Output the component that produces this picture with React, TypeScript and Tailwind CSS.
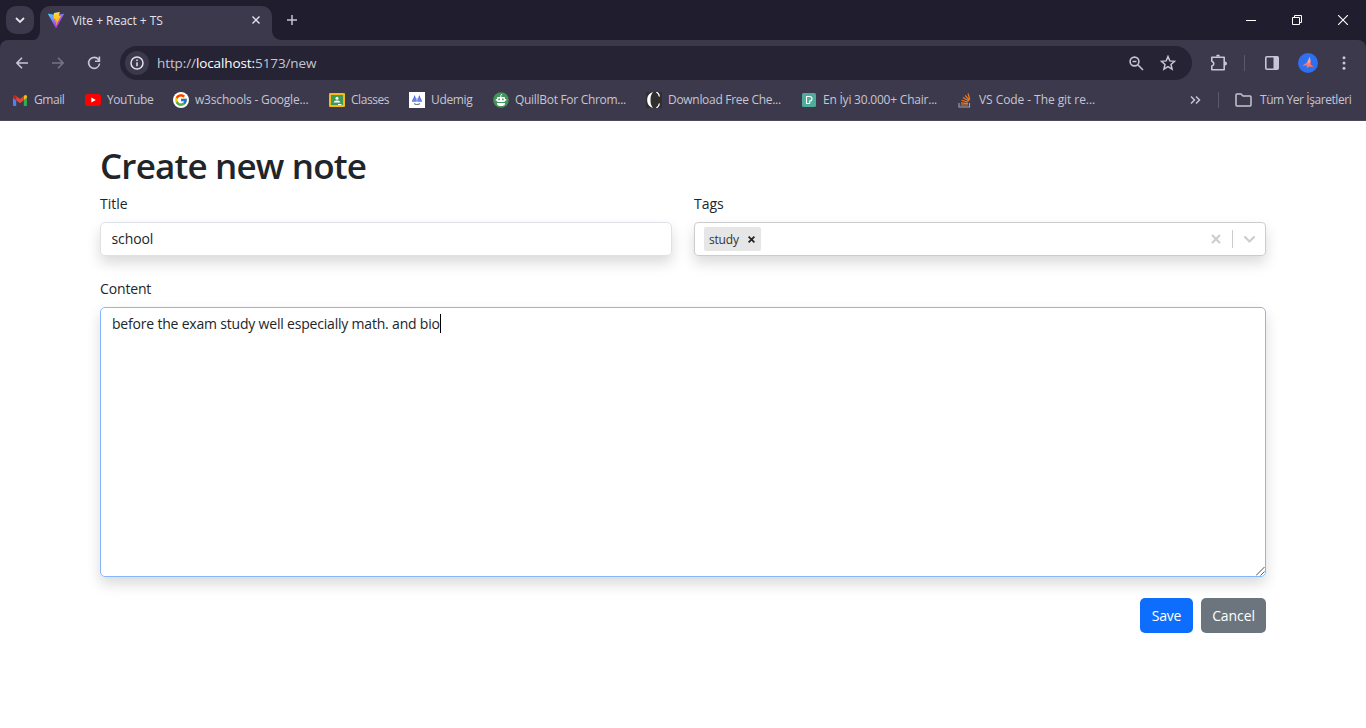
import React from "react";
import { FcGoogle } from "react-icons/fc";

type Glyph = React.ReactNode;

const GmailIcon = () => (
  <svg width="14" height="11" viewBox="52 42 88 66" preserveAspectRatio="none">
    <path fill="#4285f4" d="M58 108h14V74L52 59v43c0 3.320 2.690 6 6 6" />
    <path fill="#34a853" d="M120 108h14c3.320 0 6-2.690 6-6V59l-20 15" />
    <path fill="#fbbc04" d="M120 48v26l20-15v-8c0-7.420-8.470-11.650-14.400-7.200" />
    <path fill="#ea4335" d="M72 74V48l24 18 24-18v26L96 92" />
    <path fill="#c5221f" d="M52 51v8l20 15V48l-5.600-4.200c-5.940-4.450-14.400-.22-14.400 7.200" />
  </svg>
);

const YouTubeIcon = () => (
  <svg width="16" height="12" viewBox="0 0 16 12">
    <rect width="16" height="12" rx="3" fill="#f00" />
    <path d="M6.300 3.400v5.200L10.800 6z" fill="#fff" />
  </svg>
);

const GoogleIcon = () => (
  <span className="flex size-4 items-center justify-center rounded-full bg-white">
    <FcGoogle size={14} />
  </span>
);

const ClassroomIcon = () => (
  <svg width="16" height="14" viewBox="0 0 16 14">
    <rect width="16" height="14" rx="1" fill="#f5ba15" />
    <rect x="2" y="2" width="12" height="10" fill="#3f9a58" />
    <circle cx="8" cy="5.300" r="1.500" fill="#fff" />
    <path d="M4.700 9.400c0-1.600 2.200-2 3.300-2s3.300.4 3.300 2z" fill="#fff" />
    <path d="M9 11h3.500v1H9z" fill="#fff" />
  </svg>
);

const UdemigIcon = () => (
  <svg width="16" height="16" viewBox="0 0 16 16">
    <rect width="16" height="16" fill="#fff" />
    <path d="M5.800 3 7.600 9.500H3zM10.200 3l2.800 6.500H8.400z" fill="#4a67dc" />
    <path d="M4.200 6h3.200l.4 3.500H3zM8.600 6h3.200l1.200 3.500H8.300z" fill="#6a83e6" />
    <path d="M5 11.300q3 1.300 6 0v.9q-3 1.200-6 0z" fill="#555" />
  </svg>
);

const QuillBotIcon = () => (
  <svg width="16" height="16" viewBox="0 0 16 16">
    <circle cx="8" cy="8" r="7.800" fill="#43945a" />
    <path d="M7.800 6V3.500L9 2" stroke="#fff" strokeWidth="1" fill="none" />
    <rect x="4" y="5" width="8" height="5" rx="1" fill="#fff" />
    <path d="M2.800 7h10.400v1.800H2.800zM4 11h8v1q-.5 2-4 2t-4-2z" fill="#fff" />
    <rect x="5.300" y="6.600" width="1.600" height="1.600" fill="#43945a" />
    <rect x="9.100" y="6.600" width="1.600" height="1.600" fill="#43945a" />
  </svg>
);

const CheggIcon = () => (
  <svg width="16" height="16" viewBox="0 0 16 16">
    <rect width="16" height="16" fill="#2f2f2f" />
    <path d="M7 0C2.200 1.500 1.200 5 1.200 8s1 6.500 5.800 8C4.900 13.500 4.500 11 4.500 8S4.900 2.500 7 0z" fill="#fff" />
    <path d="M10.300 0c1.700.8 2.700 2.200 3.100 4.500M10.300 16c1.700-.8 2.700-2.200 3.100-4.500" stroke="#fff" strokeWidth="1.300" fill="none" />
  </svg>
);

const PexelsIcon = () => (
  <svg width="14" height="14" viewBox="0 0 14 14">
    <rect width="14" height="14" rx="1.500" fill="#4fab9a" />
    <path d="M4.500 3.500h3.200a2.200 2.200 0 0 1 0 4.600v2.400H4.500z" stroke="#fff" strokeWidth="1.100" fill="none" />
  </svg>
);

const StackIcon = () => (
  <svg width="14" height="15" viewBox="0 0 14 15">
    <path d="M1 10v4h10.500v-4" fill="none" stroke="#a3a3a8" strokeWidth="1.100" />
    <path d="M2.800 12h7M3 9.800l6.900.8M3.600 7.200l6.600 2M5 4.600l5.800 3.500M7.200 2.300l4.300 5M10 .5l1.800 6" stroke="#ef7a1d" strokeWidth="1.200" />
  </svg>
);

const bookmarks: { label: string; icon: Glyph; cell: string; text: string }[] = [
  { label: "Gmail", icon: <GmailIcon />, cell: "w-[73px]", text: "tracking-[-0.450px]" },
  { label: "YouTube", icon: <YouTubeIcon />, cell: "w-[88px]", text: "tracking-[-0.450px]" },
  { label: "w3schools - Google...", icon: <GoogleIcon />, cell: "w-[156px]", text: "tracking-[-0.180px]" },
  { label: "Classes", icon: <ClassroomIcon />, cell: "w-[80px]", text: "tracking-[-0.450px]" },
  { label: "Udemig", icon: <UdemigIcon />, cell: "w-[84px]", text: "tracking-[-0.350px]" },
  { label: "QuillBot For Chrom...", icon: <QuillBotIcon />, cell: "w-[153px]", text: "tracking-[-0.300px]" },
  { label: "Download Free Che...", icon: <CheggIcon />, cell: "w-[155px]", text: "tracking-[-0.300px]" },
  { label: "En İyi 30.000+ Chair...", icon: <PexelsIcon />, cell: "w-[156px]", text: "tracking-[-0.220px]" },
  { label: "VS Code - The git re...", icon: <StackIcon />, cell: "w-[150px]", text: "tracking-[-0.070px]" },
];

const ViteIcon = () => (
  <svg width="16" height="16" viewBox="0 0 256 257">
    <defs>
      <linearGradient id="shield" x1="0" x2="0.570" y1="0.050" y2="0.770">
        <stop offset="0" stopColor="#41d1ff" />
        <stop offset="1" stopColor="#bd34fe" />
      </linearGradient>
      <linearGradient id="bolt" x1="0.430" x2="0.500" y1="0.020" y2="0.890">
        <stop offset="0" stopColor="#ffea83" />
        <stop offset="0.083" stopColor="#ffdd35" />
        <stop offset="1" stopColor="#ffa800" />
      </linearGradient>
    </defs>
    <path fill="url(#shield)" d="M255.153 37.938L134.897 252.976c-2.483 4.440-8.862 4.466-11.382.048L.875 37.958c-2.746-4.814 1.371-10.646 6.827-9.670l120.385 21.517a6.537 6.537 0 0 0 2.322-.004l117.867-21.483c5.438-.991 9.574 4.796 6.877 9.620Z" />
    <path fill="url(#bolt)" d="M185.432.063L96.440 17.501a3.268 3.268 0 0 0-2.634 3.014l-5.474 92.456a3.268 3.268 0 0 0 3.997 3.378l24.777-5.718c2.318-.535 4.413 1.507 3.936 3.838l-7.361 36.047c-.495 2.426 1.782 4.500 4.151 3.780l15.304-4.649c2.372-.720 4.652 1.360 4.150 3.788l-11.698 56.621c-.732 3.542 3.979 5.473 5.943 2.437l1.313-2.028l72.516-144.720c1.215-2.423-.880-5.186-3.540-4.672l-25.505 4.922c-2.396.462-4.435-1.770-3.759-4.114l16.646-57.705c.677-2.350-1.370-4.583-3.769-4.113Z" />
  </svg>
);

function TabStrip() {
  return (
    <div className="flex h-10 bg-[#1f1d2e] text-[#e3e1e9]">
      <div className="ml-1.5 mt-1.5 flex size-7 items-center justify-center rounded-[10px] bg-[#3c394d]">
        <svg width="10" height="7" viewBox="0 0 10 7" fill="none" stroke="currentColor" strokeWidth="1.800">
          <path d="m1 1 4 4 4-4" />
        </svg>
      </div>
      <svg className="mt-[30px]" width="6" height="10" viewBox="0 0 6 10">
        <path d="M6 0v10H0C4 9 6 5 6 0z" fill="#3c394d" />
      </svg>
      <div className="mt-1.5 flex h-[34px] w-[232px] items-center rounded-t-[10px] bg-[#3c394d] pb-1.5 pl-2">
        <ViteIcon />
        <span className="ml-2 whitespace-nowrap pt-px text-[12px] tracking-[-0.030px]">Vite + React + TS</span>
        <svg className="ml-auto mr-3" width="8" height="8" viewBox="0 0 8 8" stroke="currentColor" strokeWidth="1.400">
          <path d="m.5.5 7 7m0-7-7 7" />
        </svg>
      </div>
      <svg className="mt-[30px]" width="10" height="10" viewBox="0 0 10 10">
        <path d="M0 0v10h10C4 10 0 6 0 0z" fill="#3c394d" />
      </svg>
      <svg className="ml-[5px] mt-[15px]" width="10" height="10" viewBox="0 0 10 10" stroke="#c9c4d8" strokeWidth="1.500">
        <path d="M5 0v10M0 5h10" />
      </svg>
      <div className="ml-auto mr-[18px] mt-[15px] flex h-[10px] gap-9 text-white">
        <svg width="10" height="10" viewBox="0 0 10 10" stroke="currentColor"><path d="M0 5.500h10" /></svg>
        <svg width="10" height="10" viewBox="0 0 10 10" stroke="currentColor" fill="none"><path d="M.5 2.500h7v7h-7zM2.500 2.500v-2h7v7h-2" /></svg>
        <svg width="10" height="10" viewBox="0 0 10 10" stroke="currentColor" strokeWidth="1.100"><path d="m0 0 10 10M10 0 0 10" /></svg>
      </div>
    </div>
  );
}

function Toolbar() {
  return (
    <div className="bg-[#1f1d2e]">
      <div className="flex h-[46px] items-center rounded-t-[8px] bg-[#3c394d] text-[#c9c4d8]">
        <svg className="ml-4" width="12" height="12" viewBox="0 0 12 12" fill="none" stroke="currentColor" strokeWidth="1.600">
          <path d="M6 .7.900 6 6 11.300M1 6h11" />
        </svg>
        <svg className="ml-6 text-[#777385]" width="12" height="12" viewBox="0 0 12 12" fill="none" stroke="currentColor" strokeWidth="1.600">
          <path d="M6 .7 11.100 6 6 11.300M11 6H0" />
        </svg>
        <svg className="ml-[23px]" width="14" height="14" viewBox="0 0 14 14" fill="none" stroke="currentColor" strokeWidth="1.600">
          <path d="M12.600 7.500A5.500 5.500 0 1 1 11.500 3.500L12.500 5M12.400 .5V5.200H8" />
        </svg>
        <div className="ml-[19px] flex h-[34px] w-[1072px] items-center rounded-full bg-[#252334] pl-[5px] text-[#c7c5d0]">
          <span className="flex size-6 items-center justify-center rounded-full bg-[#3c394d] text-[#e3e1e9]">
            <svg width="14" height="14" viewBox="0 0 14 14" fill="none" stroke="currentColor" strokeWidth="1.500">
              <circle cx="7" cy="7" r="6" />
              <path d="M7 6.200v4M7 3.600v1.500" />
            </svg>
          </span>
          <span className="ml-2 whitespace-nowrap text-[13.500px] tracking-[-0.100px]">http://<span className="text-white">localhost:</span>5173/new</span>
          <svg className="ml-auto" width="15" height="15" viewBox="0 0 15 15" fill="none" stroke="currentColor" strokeWidth="1.600">
            <circle cx="5.500" cy="5.500" r="4.400" />
            <path d="m8.800 8.800 5.200 5.200M3.500 5.500h4" />
          </svg>
          <svg className="ml-4 mr-4" width="16" height="16" viewBox="0 0 16 16" fill="none" stroke="currentColor" strokeWidth="1.500">
            <path d="m8 1.500 1.800 4.400 4.700.4L11 9.400l1.100 4.700L8 11.600l-4.100 2.500L5 9.400 1.500 6.300l4.700-.4z" />
          </svg>
        </div>
        <svg className="ml-[18px]" width="18" height="18" viewBox="0 0 18 18" fill="none" stroke="currentColor" strokeWidth="1.600">
          <path d="M1.800 3.200h12.400v12.600H1.800v-3.900c2.700-.9 2.700-3.600 0-4.600z" strokeLinejoin="round" />
          <path d="M6 2.500a2 2 0 0 1 4 0zM15 7.500a2 2 0 0 1 0 4z" fill="currentColor" stroke="none" />
        </svg>
        <span className="ml-[16px] h-4 w-px bg-[#5b576c]" />
        <svg className="ml-[20px]" width="14" height="14" viewBox="0 0 14 14">
          <rect x=".8" y=".8" width="12.400" height="12.400" rx="1" fill="none" stroke="currentColor" strokeWidth="1.600" />
          <path d="M8.500 1H13v12H8.500z" fill="currentColor" />
        </svg>
        <svg className="ml-[19px]" width="20" height="20" viewBox="0 0 20 20">
          <circle cx="10" cy="10" r="10" fill="#2e70f0" />
          <path d="m11.700 3.500 1.300 6-.6 3.500-4-2z" fill="#f9a199" />
          <path d="m13 7.500-1.600 4 4.200 2.300-3-.3z" fill="#d9534f" />
          <path d="m4.200 12.800 5-3.600 3.500 2.200 3 2.600-4.500-.6-2.500 1.800.4-2.600z" fill="#f07b70" />
        </svg>
        <svg className="ml-[24px]" width="4" height="14" viewBox="0 0 4 14" fill="currentColor">
          <circle cx="2" cy="1.800" r="1.500" /><circle cx="2" cy="7" r="1.500" /><circle cx="2" cy="12.200" r="1.500" />
        </svg>
      </div>
    </div>
  );
}

function BookmarksBar() {
  return (
    <div className="flex h-[35px] items-center border-b border-[#4b4859] bg-[#3c394d] pb-[6px] pl-[11px] text-[12px] text-[#c7c5d0]">
      {bookmarks.map((b) => (
        <div key={b.label} className={"flex shrink-0 items-center " + b.cell}>
          <span className="flex w-[18px] shrink-0 justify-center">{b.icon}</span>
          <span className={"ml-[5px] whitespace-nowrap " + b.text}>{b.label}</span>
        </div>
      ))}
      <svg className="ml-auto" width="11" height="8" viewBox="0 0 11 8" fill="none" stroke="currentColor" strokeWidth="1.500">
        <path d="m1 .5 3.500 3.500L1 7.500M6 .5 9.500 4 6 7.500" />
      </svg>
      <span className="ml-[17px] h-4 w-px bg-[#5b576c]" />
      <svg className="ml-[16px]" width="17" height="14" viewBox="0 0 17 14" fill="none" stroke="currentColor" strokeWidth="1.500">
        <path d="M1 12V2q0-1 1-1h4l2 2h7q1 0 1 1v8q0 1-1 1H2q-1 0-1-1z" />
      </svg>
      <span className="ml-[7px] w-[107px] whitespace-nowrap pl-px tracking-[-0.430px]">Tüm Yer İşaretleri</span>
    </div>
  );
}

function NoteForm() {
  return (
    <main className="px-[100px] pt-[24px] text-[14px] tracking-[-0.030px] text-[#212529]">
      <h1 className="h-[42px] whitespace-nowrap text-[35px] leading-[42px] font-semibold tracking-[-0.830px]">Create new note</h1>
      <div className="mt-[6px] grid grid-cols-2 gap-[22px]">
        <div>
          <label className="block h-[21px] leading-[21px]">Title</label>
          <div className="mt-2 flex h-[34px] items-center rounded-[5px] border border-[#dee2e6] px-[10.500px] pb-[2px] tracking-[-0.100px] shadow-[0_7px_14px_rgba(0,0,0,0.150)]">school</div>
        </div>
        <div>
          <label className="block h-[21px] leading-[21px]">Tags</label>
          <div className="mt-2 flex h-[34px] items-center rounded-[4px] border border-[#ccc] pl-[9px] shadow-[0_7px_14px_rgba(0,0,0,0.150)]">
            <span className="flex h-6 w-[57px] items-center rounded-[2px] bg-[#e6e6e6] pl-[5px] text-[12px] tracking-[-0.200px] text-[#333]">
              <span className="pt-[2px]">study</span>
              <svg className="ml-auto mr-[6px]" width="7" height="7" viewBox="0 0 7 7" stroke="#222" strokeWidth="1.700"><path d="m.6.6 5.800 5.800m0-5.800L.6 6.400" /></svg>
            </span>
            <svg className="ml-auto" width="10" height="10" viewBox="0 0 10 10" stroke="#ccc" strokeWidth="2"><path d="m1 1 8 8m0-8L1 9" /></svg>
            <span className="ml-[11px] h-[18px] w-px bg-[#ccc]" />
            <svg className="ml-[11px] mr-[10px]" width="11" height="7" viewBox="0 0 11 7" fill="none" stroke="#ccc" strokeWidth="2" strokeLinecap="round"><path d="m1 1 4.500 4.500L10 1" /></svg>
          </div>
        </div>
      </div>
      <label className="mt-[22px] block h-[21px] leading-[21px] tracking-[-0.150px]">Content</label>
      <div className="mt-2 flex h-[270px] justify-between rounded-[5px] border border-[#86b7fe] pl-[11px] pt-[5px] shadow-[0_7px_14px_rgba(0,0,0,0.150)]">
        <div className="flex h-[21px] items-center whitespace-nowrap tracking-[-0.195px]">
          before the exam study well especially math. and bio
          <span className="h-[19px] w-px bg-black" />
        </div>
        <svg className="self-end" width="9" height="9" viewBox="0 0 9 9" stroke="#555" strokeWidth="1"><path d="m0 8.500 8.500-8.500M4.500 8.500l4-4" /></svg>
      </div>
      <div className="mt-[21px] flex h-[35px] justify-end gap-2 pt-0 text-white">
        <button className="w-[53px] rounded-[5px] bg-[#0d6efd] tracking-[-0.200px]">Save</button>
        <button className="w-[65px] rounded-[5px] bg-[#6c757d] tracking-[-0.100px]">Cancel</button>
      </div>
    </main>
  );
}

export default function App() {
  return (
    <div className="h-[728px] w-[1366px] overflow-hidden bg-white font-['Open_Sans','Noto_Sans',sans-serif]">
      <TabStrip />
      <Toolbar />
      <BookmarksBar />
      <NoteForm />
    </div>
  );
}
